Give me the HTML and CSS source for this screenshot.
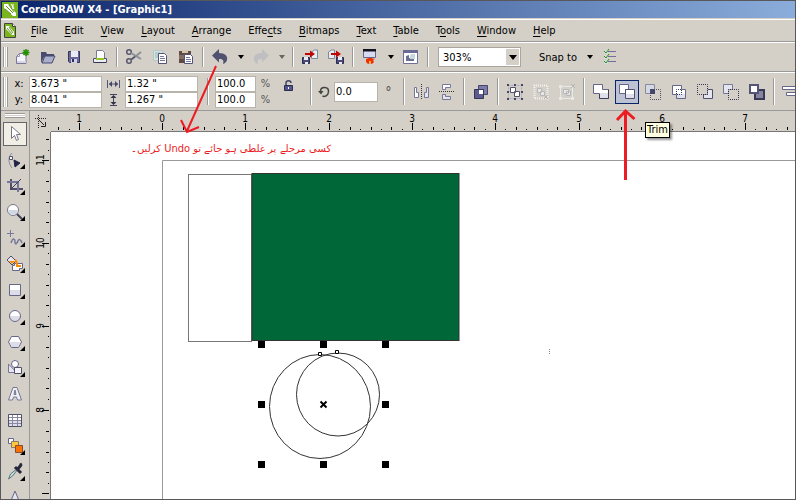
FILE: index.html
```
<!DOCTYPE html>
<html lang="en">
<head>
    <meta charset="UTF-8">
    <title>CorelDRAW X4 - [Graphic1]</title>
    <link rel="stylesheet" href="styles.css">
</head>
<body>
<div class="app">
    <header class="titlebar">
        <svg class="logo" viewBox="0 0 16 16"><rect width="16" height="16" fill="#7ab51d"/><path d="M2 2l4 0 8 9 0 3-3 0-9-8z" fill="#fff"/><path d="M4 4l7 7M7 3l5 7M3 7l6 5" stroke="#5f961a"/><path d="M11 2v5M9 2l3 5" stroke="#fff"/></svg>
        <h1>CorelDRAW X4 - [Graphic1]</h1>
    </header>

    <nav class="menubar">
        <svg class="doc" viewBox="0 0 14 18"><path d="M1.500 1.500h8l3 3v11h-11z" fill="#7ab51d" stroke="#444"/><path d="M9.500 1.500v3h3" fill="#fff" stroke="#444"/><path d="M3 4l3 0 5 6 0 3-2 0-6-6z" fill="#fff"/><path d="M4 6l5 6M6 5l4 6" stroke="#5f961a"/></svg>
        <button><u>F</u>ile</button>
        <button><u>E</u>dit</button>
        <button><u>V</u>iew</button>
        <button><u>L</u>ayout</button>
        <button><u>A</u>rrange</button>
        <button>Effe<u>c</u>ts</button>
        <button><u>B</u>itmaps</button>
        <button><u>T</u>ext</button>
        <button><u>T</u>able</button>
        <button>T<u>o</u>ols</button>
        <button><u>W</u>indow</button>
        <button><u>H</u>elp</button>
    </nav>

    <div class="toolbar standard">
        <span class="grip"></span>
        <button class="tool" aria-label="New"><svg viewBox="0 0 20 20"><path d="M4.500 16.500v-7l3-3h6.500v10z" fill="#f4f4fa" stroke="#77779a"/><path d="M4.500 9.500h3v-3" fill="none" stroke="#9a9ab4"/><path d="M5 14h9v2H5z" fill="#d5d6e2"/><path d="M14 2v7M10.500 5.500h7M11.500 3l5 5M16.500 3l-5 5" stroke="#259000" stroke-width="1.500"/></svg></button>
        <button class="tool" aria-label="Open"><svg viewBox="0 0 20 20"><path d="M3 16V5h5l1 2h7v3H6z" fill="#4a4a70"/><path d="M4 16l3-7h10l-3 7z" fill="#a9aecb" stroke="#4a4a70"/></svg></button>
        <button class="tool" aria-label="Save"><svg viewBox="0 0 20 20"><path d="M4.500 4.500h11v11h-10l-1-1z" fill="#68689b" stroke="#35355e"/><path d="M7 4h7v6H7z" fill="#e9eaf4"/><path d="M7 12h6v4H7z" fill="#d0d2e4"/><path d="M8 12h2v3H8z" fill="#2d2d55"/></svg></button>
        <button class="tool" aria-label="Print"><svg viewBox="0 0 20 20"><path d="M6.500 11V3.500h6l2 2V11" fill="#fff" stroke="#7a7a96"/><path d="M3.500 11.500h13v4h-13z" fill="#edeef3" stroke="#50506c"/><path d="M6 12h8" stroke="#94c82c" stroke-width="2"/><path d="M4 15.500h12" stroke="#35354f"/></svg></button>
        <span class="sep"></span>
        <button class="tool" aria-label="Cut"><svg viewBox="0 0 20 20"><circle cx="5" cy="5" r="2.300" fill="none" stroke="#55576d" stroke-width="1.500"/><circle cx="5" cy="14" r="2.300" fill="none" stroke="#55576d" stroke-width="1.500"/><path d="M7 6l10 6M7 13l10-8" stroke="#8d8f99" stroke-width="2"/><path d="M7 12.500l4-3" stroke="#4a4b60" stroke-width="1.500"/></svg></button>
        <button class="tool" aria-label="Copy"><svg viewBox="0 0 20 20"><path d="M3.500 3.500h9v10h-9z" fill="#d3e3df" stroke="#b3c9c9"/><path d="M5 6h5M5 8h4M5 10h4" stroke="#94b6b9"/><path d="M8.500 6.500h6l2 2v8h-8z" fill="#fff" stroke="#53537a"/><path d="M10 9.500h4M10 11.500h5M10 13.500h5" stroke="#77779a"/></svg></button>
        <button class="tool" aria-label="Paste"><svg viewBox="0 0 20 20"><path d="M3 4h12v12H3z" fill="#5e4b46"/><path d="M3 8h12v4H3z" fill="#836b60"/><path d="M6 3h6v3H6z" fill="#d6c5ae"/><path d="M8.500 7.500h6l2 2v7h-8z" fill="#fff" stroke="#53537a"/><path d="M10 10.500h4M10 12.500h5M10 14.500h5" stroke="#77779a"/></svg></button>
        <span class="sep"></span>
        <button class="tool" aria-label="Undo"><svg viewBox="0 0 20 20"><path d="M2 8.500L9 2v4c6 0 9 3 8 7-.500 2-2 3.500-4 4 1-3 .500-5-4-5v3.500z" fill="#515170"/></svg></button>
        <button class="drop" aria-label="Undo list"><svg viewBox="0 0 6 4"><path d="M0 0h6L3 4z"/></svg></button>
        <button class="tool" aria-label="Redo" disabled><svg viewBox="0 0 20 20"><path d="M18 8.500L11 2v4C5 6 2 9 3 13c.500 2 2 3.500 4 4-1-3-.500-5 4-5v3.500z" fill="#bfbfc2"/></svg></button>
        <button class="drop" aria-label="Redo list" disabled><svg viewBox="0 0 6 4"><path d="M0 0h6L3 4z"/></svg></button>
        <span class="sep"></span>
        <button class="tool" aria-label="Import"><svg viewBox="0 0 20 20"><path d="M11.500 11.500V5l3-2h3v8.500z" fill="#e4edf0" stroke="#83879a"/><path d="M2.500 10.500h7v6h-7z" fill="#4a4a78" stroke="#2c2c51"/><path d="M4 10h4v3H4zM5 15h3v2H5z" fill="#e9eaf4"/><path d="M5 6h5V3.500l5 3.500-5 3.500V8H5z" fill="#c00505"/></svg></button>
        <button class="tool" aria-label="Export"><svg viewBox="0 0 20 20"><path d="M2.500 11.500V5l3-2h3v8.500z" fill="#e4edf0" stroke="#83879a"/><path d="M10.500 10.500h7v6h-7z" fill="#4a4a78" stroke="#2c2c51"/><path d="M12 10h4v3h-4zM13 15h3v2h-3z" fill="#e9eaf4"/><path d="M5 6h5V3.500l5 3.500-5 3.500V8H5z" fill="#c00505"/></svg></button>
        <span class="sep"></span>
        <button class="tool" aria-label="Application launcher"><svg viewBox="0 0 20 20"><path d="M3.500 2.500h12v8h-12z" fill="#d9dcf0" stroke="#66668a"/><path d="M3 2h13v2.500H3z" fill="#111120"/><path d="M6 12l3-1h2l4 1-2 1 1 2-2 2-2-1-2 1-2-2z" fill="#f03000"/><path d="M9 14h2v2H9z" fill="#ffb238"/></svg></button>
        <button class="drop" aria-label="Launcher list"><svg viewBox="0 0 6 4"><path d="M0 0h6L3 4z"/></svg></button>
        <button class="tool" aria-label="Welcome screen"><svg viewBox="0 0 20 20"><path d="M2.500 3.500h14v13h-14z" fill="#fff" stroke="#70709a"/><path d="M2 3h15v3H2z" fill="#6a6a95"/><path d="M5 9l3-1v3h2V8l3-1v7H5z" fill="#6b7196"/><path d="M9 8l2-1h3v5H9z" fill="#c7d7dc"/></svg></button>
        <span class="sep"></span>
        <span class="zoom">
            <select aria-label="Zoom levels"><option>303%</option></select>
            <span class="zoom-arrow"><svg viewBox="0 0 8 5"><path d="M0 0h8L4 5z"/></svg></span>
        </span>
        <button class="snap">Snap to <svg viewBox="0 0 6 4"><path d="M0 0h6L3 4z"/></svg></button>
        <button class="tool" aria-label="Options"><svg viewBox="0 0 20 20"><path d="M8 4.500h8M8 9.500h8M8 14.500h8" stroke="#70709a"/><path d="M4 3h4v4H4zM4 8h4v4H4zM4 13h4v4H4z" fill="#d6d9df"/><path d="M4 4l2 2 3-4M4 9l2 2 3-4M4 14l2 2 3-4" fill="none" stroke="#299513"/></svg></button>
    </div>

    <div class="toolbar property">
        <span class="grip"></span>
        <div class="fields position">
            <label for="pos-x">x:</label><input id="pos-x" value="3.673 &quot;">
            <label for="pos-y">y:</label><input id="pos-y" value="8.041 &quot;">
        </div>
        <div class="fields size">
            <label for="obj-w" aria-label="Width"><svg viewBox="0 0 13 12"><path d="M.5 2v8M12.500 2v8M2 6h9" stroke="#55557a"/><path d="M2 6l3-3v6zM11 6L8 3v6z" fill="#444466"/></svg></label><input id="obj-w" value="1.32 &quot;">
            <label for="obj-h" aria-label="Height"><svg viewBox="0 0 13 12"><path d="M3 .5h7M3 11.500h7M6.500 2v8" stroke="#444460"/><path d="M6.500 1l3 3h-6zM6.500 11l3-3h-6z" fill="#333344"/></svg></label><input id="obj-h" value="1.267 &quot;">
        </div>
        <span class="sep"></span>
        <div class="fields scale">
            <input id="scale-x" value="100.0"><label for="scale-x">%</label>
            <input id="scale-y" value="100.0"><label for="scale-y">%</label>
        </div>
        <button class="tool lock" aria-label="Nonproportional scaling"><svg viewBox="0 0 20 20"><path d="M8 9V6c0-3 5-3 5 0" fill="none" stroke="#444466" stroke-width="1.500"/><path d="M6.500 8.500h8v5h-8z" fill="#55558d" stroke="#2c2c51"/><path d="M10 10h1v2h-1z" fill="#fff"/></svg></button>
        <span class="sep"></span>
        <div class="rotation">
            <label for="angle" aria-label="Angle of rotation"><svg viewBox="0 0 12 12"><path d="M2.500 5C3 0 11 .5 10.500 6c-.5 4-4 5-6 4" fill="none" stroke="#444" stroke-width="1.500"/><path d="M0 5h5.500L3 8.500z" fill="#444"/></svg></label>
            <input id="angle" value="0.0">
            <span>°</span>
        </div>
        <span class="sep"></span>
        <button class="tool" aria-label="Mirror horizontally"><svg viewBox="0 0 20 20"><path d="M3.500 5.500h2v5h2v5h-4z" fill="#fff" stroke="#77779a"/><path d="M17.500 5.500h-2v5h-2v5h4z" fill="#e4e5ef" stroke="#77779a"/><path d="M10.500 2v16" stroke="#333" stroke-dasharray="1 1"/></svg></button>
        <button class="tool" aria-label="Mirror vertically"><svg viewBox="0 0 20 20"><path d="M5.500 2.500h8v3h-5v2h-3z" fill="#fff" stroke="#77779a"/><path d="M5.500 17.500h8v-3h-5v-2h-3z" fill="#e4e5ef" stroke="#77779a"/><path d="M2 9.500h16" stroke="#333" stroke-dasharray="1 1"/></svg></button>
        <span class="sep"></span>
        <button class="tool" aria-label="Combine"><svg viewBox="0 0 20 20"><path d="M7.500 3.500h9v9h-9z" fill="#7c7ca8" stroke="#44446c"/><path d="M3.500 7.500h9v9h-9z" fill="#5c5c8c" stroke="#34345c"/><path d="M8 8h4v4H8z" fill="#fff"/></svg></button>
        <span class="sep"></span>
        <button class="tool" aria-label="Group"><svg viewBox="0 0 20 20"><path d="M3.500 3.500h13v13h-13z" fill="none" stroke="#aaaabd" stroke-dasharray="2 1"/><path d="M2 2h2v2H2zM9 2h2v2H9zM16 2h2v2h-2zM2 9h2v2H2zM16 9h2v2h-2zM2 16h2v2H2zM9 16h2v2H9zM16 16h2v2h-2z" fill="#44446c"/><path d="M5.500 5.500h5v5h-5zM9.500 9.500h5v5h-5z" fill="#fff" stroke="#50506c"/></svg></button>
        <button class="tool" aria-label="Ungroup" disabled><svg viewBox="0 0 20 20"><path class="dots" d="M3.500 3.500h13v13h-13z" fill="none" stroke="#f1f1ef" stroke-width="2"/><path d="M6.500 6.500h4v4h-4zM9.500 9.500h4v4h-4z" fill="#e8e8e8" stroke="#b8b8bb"/><path d="M13 13l4 4M17 13l-4 4" stroke="#b6b3ae"/></svg></button>
        <button class="tool" aria-label="Ungroup all" disabled><svg viewBox="0 0 20 20"><path d="M3.500 4.500h12v12h-12z" fill="none" stroke="#e8e8e6"/><path d="M2 3h3v3H2zM14 15h3v3h-3zM2 15h3v3H2z" fill="#e8e8e6"/><path d="M6.500 7.500h5v4h-5zM9.500 9.500h4v4h-4z" fill="#e8e8e8" stroke="#b8b8bb"/><path d="M14 2l4 4M18 2l-4 4" stroke="#b6b3ae"/></svg></button>
        <span class="sep"></span>
        <button class="tool" aria-label="Weld"><svg viewBox="0 0 20 20"><path d="M2.500 2.500h9v5h6v9h-9v-5h-6z" fill="#fff" stroke="#66668a"/><path d="M9 11h8v5H9z" fill="#dfe0ea"/><path d="M8.500 12v4.500h9v-9" fill="none" stroke="#3d3d5c"/></svg></button>
        <button class="tool selected" aria-label="Trim"><svg viewBox="0 0 20 20"><path d="M2.500 2.500h9v5h-3v4h-6z" fill="#fff" stroke="#66668a"/><path d="M8.500 7.500h9v9h-9z" fill="#fff" stroke="#50506c"/><path d="M9 12h8v4H9z" fill="#dfe0ea"/></svg></button>
        <button class="tool" aria-label="Intersect"><svg viewBox="0 0 20 20"><path d="M2.500 2.500h9v9h-9z" fill="#d5dae2" stroke="#8888a2"/><path d="M7 7h5v5H7z" fill="#44446c"/><path class="dots" d="M7.500 7.500h10v10h-10z" fill="none" stroke="#50506c"/></svg></button>
        <button class="tool" aria-label="Simplify"><svg viewBox="0 0 20 20"><path d="M3.500 3.500h9v4h4v9h-9v-4h-4z" fill="#fff" stroke="#66668a"/><path d="M8 12h8v4H8z" fill="#dfe0ea"/><path class="dots" d="M7.500 7.500h5v5h-5z" fill="none" stroke="#333355"/></svg></button>
        <button class="tool" aria-label="Front minus back"><svg viewBox="0 0 20 20"><path d="M12.500 7.500h5v9h-9v-4h4z" fill="#e4e5ef" stroke="#50506c"/><path class="dots" d="M2.500 2.500h10v10h-10z" fill="#d4d0c8" stroke="#333355"/></svg></button>
        <button class="tool" aria-label="Back minus front"><svg viewBox="0 0 20 20"><path d="M2.500 2.500h9v5h-4v4h-5z" fill="#e4e5ef" stroke="#77779a"/><path class="dots" d="M7.500 7.500h10v10h-10z" fill="#d4d0c8" stroke="#333355"/></svg></button>
        <button class="tool" aria-label="Create boundary"><svg viewBox="0 0 20 20"><path d="M8 8h9v9H8z" fill="#85859f" stroke="#383858" stroke-width="2"/><path d="M3 3h8v8H3z" fill="#fff" stroke="#55557a" stroke-width="2"/></svg></button>
        <span class="sep"></span>
        <button class="tool" aria-label="Align and distribute"><svg viewBox="0 0 20 20"><path d="M1.500 4.500h14v3h-14zM5.500 10.500h12v3h-12z" fill="#fff" stroke="#66668a"/></svg></button>
    </div>

    <main class="workspace">
        <aside class="toolbox">
            <span class="grip"></span>
            <button class="tool selected" aria-label="Pick"><svg viewBox="0 0 20 20"><path d="M6.500 2.500v12l3-3 2 5 2-1-2-5h4z" fill="#fff" stroke="#77778a"/></svg></button>
            <button class="tool fly" aria-label="Shape"><svg viewBox="0 0 20 20"><path d="M7 3C2 8 4 14 7 18" fill="none" stroke="#8888a0"/><path d="M4.500 6.500h3v3h-3z" fill="#fff" stroke="#50506c"/><path d="M9 10l6 3-5 4z" fill="#222244" stroke="#222244"/></svg></button>
            <button class="tool fly" aria-label="Crop"><svg viewBox="0 0 20 20"><path d="M6 3v10h12" fill="none" stroke="#50506c" stroke-width="2"/><path d="M2 6h11v10" fill="none" stroke="#77779a" stroke-width="2"/><path d="M5 14L16 3" stroke="#3d3d5c"/></svg></button>
            <button class="tool fly" aria-label="Zoom"><svg viewBox="0 0 20 20"><circle cx="8" cy="8" r="5.500" fill="#fff" stroke="#77778a"/><path d="M3.500 8h9a4.500 4.500 0 01-9 0z" fill="#cfd8e4"/><path d="M12 12l5 5" stroke="#44445c" stroke-width="2"/></svg></button>
            <button class="tool fly" aria-label="Freehand"><svg viewBox="0 0 20 20"><path d="M5.500 2v7M2 5.500h7" stroke="#77779a"/><path d="M6 15c2-6 4-4 4-1s2 2 3-1 3-1 4 2" fill="none" stroke="#77779a" stroke-width="1.500"/></svg></button>
            <button class="tool fly" aria-label="Smart fill"><svg viewBox="0 0 20 20"><path d="M6 2l5 5-4 4-5-5z" fill="#e7e8ef" stroke="#50506c"/><path d="M4 7h6l-3 3z" fill="#ff8a00"/><path d="M9.500 9.500h8v5h-3v2h-7v-5h2z" fill="#fff" stroke="#66668a"/><path d="M10 6q2 1 2 6h4" fill="none" stroke="#ff8a00" stroke-width="2"/></svg></button>
            <button class="tool fly" aria-label="Rectangle"><svg viewBox="0 0 20 20"><path d="M4.500 4.500h11v11h-11z" fill="#fff" stroke="#66668a"/><path d="M5 10h10v5H5z" fill="#dcdde6"/></svg></button>
            <button class="tool fly" aria-label="Ellipse"><svg viewBox="0 0 20 20"><circle cx="10" cy="10" r="5.500" fill="#fff"/><path d="M4.500 10h11a5.500 5.500 0 01-11 0z" fill="#dcdde6"/><circle cx="10" cy="10" r="5.500" fill="none" stroke="#66668a"/></svg></button>
            <button class="tool fly" aria-label="Polygon"><svg viewBox="0 0 20 20"><path d="M6.500 4.500h7l3 5.500-3 5.500h-7L3.500 10z" fill="#fff" stroke="#66668a"/><path d="M4.500 10h11l-2.500 5H7z" fill="#dcdde6"/></svg></button>
            <button class="tool fly" aria-label="Basic shapes"><svg viewBox="0 0 20 20"><path d="M3.500 6v8.500h8z" fill="#e4e5ef" stroke="#77779a"/><circle cx="10" cy="6" r="3.500" fill="#fff" stroke="#66668a"/><path d="M9.500 9.500h7v6h-7z" fill="#f4f4fa" stroke="#50506c"/></svg></button>
            <button class="tool" aria-label="Text"><svg viewBox="0 0 20 20"><path d="M8 3.500h4l4.500 12.500h-4l-1-3h-3l-1 3h-4zM9 10.500h2L10 6z" fill="#eef0f7" fill-rule="evenodd" stroke="#77778f"/></svg></button>
            <button class="tool" aria-label="Table"><svg viewBox="0 0 20 20"><path d="M3.500 4.500h13v12h-13z" fill="#fff" stroke="#50506c"/><path d="M4 11h12v5H4z" fill="#dcdde6"/><path d="M4 7.500h12M4 10.500h12M4 13.500h12M7.500 5v11M12.500 5v11" stroke="#8888a2"/></svg></button>
            <button class="tool fly" aria-label="Interactive blend"><svg viewBox="0 0 20 20"><path d="M3.500 2.500h5v5h-5z" fill="#fff" stroke="#66668a"/><path d="M6.500 5.500h7v6h-7z" fill="#ffc83c" stroke="#8a7a66"/><path d="M10.500 9.500h7v7h-7z" fill="#ff7200" stroke="#8a4a2c"/></svg></button>
            <button class="tool fly" aria-label="Eyedropper"><svg viewBox="0 0 20 20"><path d="M3.500 17l2-5 5-4 1 1-4 5z" fill="#c7dcdc" stroke="#587678"/><path d="M10 5l6 6M12 8l4-5" stroke="#26263c" stroke-width="3"/><path d="M15 3l2-1" stroke="#26263c" stroke-width="3"/></svg></button>
            <button class="tool" aria-label="Outline"><svg viewBox="0 0 20 20"><path d="M10 3l5 12H5z" fill="#e4e5ef" stroke="#66668a"/></svg></button>
        </aside>

        <div class="origin">
            <svg viewBox="0 0 20 20"><path d="M8.500 4v14M5 7.500h11" stroke="#222" stroke-dasharray="1 1"/><path d="M9 9l5 5" stroke="#222"/><path d="M15.500 11v4.500H11" fill="none" stroke="#222"/></svg>
        </div>

        <svg class="ruler ruler-h">
            <defs>
                <g id="inch">
                    <path d="M0 12h1v7H0zM21 16h1v3h-1zM42 16h1v3h-1zM62 16h1v3h-1zM10 18h1v1h-1zM31 18h1v1h-1zM52 18h1v1h-1zM73 18h1v1h-1z"/>
                </g>
            </defs>
            <use href="#inch" x="-55"/><use href="#inch" x="28"/><use href="#inch" x="111"/><use href="#inch" x="194"/><use href="#inch" x="278"/>
            <use href="#inch" x="361"/><use href="#inch" x="444"/><use href="#inch" x="528"/><use href="#inch" x="611"/><use href="#inch" x="694"/>
            <text x="28" y="11">1</text><text x="111" y="11">0</text><text x="194" y="11">1</text><text x="278" y="11">2</text><text x="361" y="11">3</text>
            <text x="444" y="11">4</text><text x="528" y="11">5</text><text x="611" y="11">6</text><text x="694" y="11">7</text>
        </svg>

        <svg class="ruler ruler-v">
            <!-- same ticks mirrored along the diagonal -->
            <g transform="matrix(0 1 1 0 0 0)">
                <use href="#inch" x="-55"/><use href="#inch" x="28"/><use href="#inch" x="111"/><use href="#inch" x="194"/><use href="#inch" x="278"/><use href="#inch" x="361"/>
            </g>
            <g transform="rotate(-90)">
                <text x="-28" y="14">11</text><text x="-111" y="14">10</text><text x="-194" y="14">9</text><text x="-278" y="14">8</text>
            </g>
        </svg>

        <section class="canvas">
            <svg class="drawing">
                <path d="M111.500 3000V28.500H3000" fill="none" stroke="#999"/>
                <rect x="137.500" y="42.500" width="63" height="167" fill="#fff" stroke="#777"/>
                <rect x="201" y="41.500" width="207" height="167" fill="#006838" stroke="#333"/>
                <g fill="none" stroke="#333">
                    <ellipse cx="269" cy="274.500" rx="50.500" ry="52"/>
                    <circle cx="287" cy="262.500" r="41.500"/>
                    <path d="M267.500 220.500h3v3h-3zM284.500 218.500h3v3h-3z" fill="#fff" stroke="#000"/>
                </g>
                <path d="M207 209h7v7h-7zM269 209h7v7h-7zM331 209h7v7h-7zM207 269h7v7h-7zM331 269h7v7h-7zM207 329h7v7h-7zM269 329h7v7h-7zM331 329h7v7h-7z"/>
                <path d="M269.500 269.500l6 6M275.500 269.500l-6 6" stroke="#000" stroke-width="2"/>
                <path d="M498.500 217v5" stroke="#888" stroke-dasharray="1 1"/>
            </svg>
            <p class="note" lang="ur" dir="rtl">کسی مرحلے پر غلطی ہو جائے تو <span lang="en">Undo</span> کرلیں۔</p>
        </section>
    </main>

    <svg class="arrows">
        <path d="M216 66L187 131M181 120l6 12 12-5" stroke-width="2"/>
        <path d="M625.500 180V111M617 120l8.500-9 9 8" stroke-width="3"/>
    </svg>
    <div class="tooltip" role="tooltip">Trim</div>
</div>
</body>
</html>
```
FILE: styles.css
```
* {
    box-sizing: border-box;
}
body {
    margin: 0;
    font-family: "DejaVu Sans Condensed", "DejaVu Sans", sans-serif;
    font-size: 11px;
    color: #000;
}
button,
input,
select {
    font: inherit;
    color: inherit;
}
button {
    background: none;
    border: none;
    padding: 0;
}
svg {
    display: block;
    flex: none;
}
.app {
    position: relative;
    display: flex;
    flex-direction: column;
    height: 100vh;
    overflow: hidden;
    background: #d4d0c8;
    border: 1px solid #58585a;
}
.titlebar {
    display: flex;
    align-items: center;
    height: 17px;
    padding-left: 1px;
    background: linear-gradient(to right, #0a246a, #8aaddb);
    flex: none;
}
.titlebar h1 {
    margin: 0 0 0 3px;
    font-size: 11px;
    color: #fff;
}
.logo {
    width: 16px;
    height: 16px;
}
.menubar {
    display: flex;
    align-items: center;
    height: 23px;
    margin-top: 1px;
    padding-left: 2px;
    gap: 17px;
    border-top: 1px solid #fff;
    border-bottom: 1px solid #999;
    flex: none;
}
.menubar u {
    text-underline-offset: 2px;
}
.doc {
    width: 14px;
    height: 18px;
    margin-right: -3px;
}
.toolbar {
    display: flex;
    align-items: center;
    border-top: 1px solid #fff;
    border-bottom: 1px solid #999;
    padding-left: 2px;
    flex: none;
}
.toolbar > * {
    flex: none;
}
.standard {
    height: 30px;
}
.property {
    height: 39px;
}
.grip {
    width: 5px;
    height: 20px;
    margin-right: 1px;
    border: solid #999;
    border-width: 0 1px;
    background: linear-gradient(to right, #fff 1px, transparent 1px, transparent 2px, #fff 2px);
}
.property .grip {
    height: 30px;
}
.sep {
    width: 2px;
    height: 20px;
    margin: 0 3px;
    background: #fff;
    border-left: 1px solid #999;
}
.property .sep {
    height: 27px;
}
.tool {
    display: flex;
    align-items: center;
    justify-content: center;
    width: 26px;
    height: 24px;
}
.tool svg {
    width: 20px;
    height: 20px;
}
.tool.selected {
    width: 24px;
    margin: 0 1px;
    background: #bcc2d4;
    border: 1px solid #0a246a;
}
.dots {
    stroke-dasharray: 1 1;
    stroke-dashoffset: 0.5;
}
.drop {
    display: flex;
    justify-content: center;
    width: 15px;
}
.drop svg,
.snap svg {
    width: 6px;
    height: 4px;
}
.drop:disabled {
    opacity: 0.5;
}
.zoom {
    position: relative;
    margin-left: 6px;
}
.zoom select {
    display: block;
    appearance: none;
    width: 83px;
    height: 20px;
    padding: 0 20px 0 4px;
    background: #fff;
    border: 1px solid #aaa69e;
    border-radius: 0;
}
.zoom-arrow {
    position: absolute;
    top: 2px;
    right: 2px;
    display: flex;
    align-items: center;
    justify-content: center;
    width: 13px;
    height: 16px;
    background: #d4d0c8;
    pointer-events: none;
}
.zoom-arrow svg {
    width: 8px;
    height: 5px;
}
.snap {
    display: flex;
    align-items: center;
    gap: 10px;
    margin: 0 4px 0 18px;
}
.toolbar input {
    width: 73px;
    height: 16px;
    padding: 0 1px;
    background: #fff;
    border: 1px solid #b8b4ac;
}
.fields {
    display: grid;
    align-items: center;
    justify-items: center;
}
.position {
    grid-template-columns: 20px 73px;
}
.size {
    grid-template-columns: 23px 73px;
    margin-right: 6px;
}
.size svg {
    width: 13px;
    height: 12px;
}
.scale {
    grid-template-columns: 41px 19px;
    margin-left: 3px;
}
.toolbar .scale input {
    width: 41px;
}
.scale label {
    color: #555;
}
.lock {
    padding-bottom: 10px;
}
.property .lock {
    margin-right: 6px;
}
.rotation {
    display: flex;
    align-items: center;
    gap: 4px;
    margin: 0 5px 0 3px;
}
.rotation svg {
    width: 12px;
    height: 12px;
}
.toolbar .rotation input {
    width: 44px;
    height: 20px;
}
.rotation span {
    width: 13px;
    font-size: 14px;
    color: #555;
    text-align: center;
}
.workspace {
    display: grid;
    grid-template-columns: 29px 21px 1fr;
    grid-template-rows: 21px 1fr;
    flex: 1;
    min-height: 0;
}
.toolbox {
    grid-row: 1 / 3;
    display: flex;
    flex-direction: column;
    align-items: center;
    gap: 2px;
    border-right: 1px solid #999;
    overflow: hidden;
}
.toolbox .grip {
    width: 20px;
    height: 5px;
    margin: 2px 0;
    border-width: 1px 0;
    background: linear-gradient(#fff 1px, transparent 1px, transparent 2px, #fff 2px);
    flex: none;
}
.toolbox .tool {
    position: relative;
    flex: none;
}
.toolbox .selected {
    background: #f1eee6;
    border-color: #666;
}
.fly::after {
    content: "";
    position: absolute;
    right: 3px;
    bottom: 3px;
    width: 5px;
    height: 5px;
    background: #000;
    clip-path: polygon(100% 0, 100% 100%, 0 100%);
}
.origin svg {
    width: 20px;
    height: 20px;
}
.ruler {
    width: 100%;
    height: 100%;
    min-width: 0;
    min-height: 0;
    overflow: hidden;
    shape-rendering: crispEdges;
}
.ruler text {
    font-size: 10px;
    text-anchor: middle;
}
.ruler-h {
    border-bottom: 1px solid #777;
}
.ruler-v {
    border-right: 1px solid #777;
}
.canvas {
    position: relative;
    background: #fff;
    overflow: hidden;
}
.drawing {
    position: absolute;
    width: 100%;
    height: 100%;
}
.note {
    position: absolute;
    left: 80px;
    top: 8px;
    margin: 0;
    font-family: "DejaVu Sans", sans-serif;
    font-size: 10px;
    line-height: 18px;
    color: #ed1c24;
    white-space: nowrap;
}
.note span {
    font-family: "DejaVu Sans Condensed", "DejaVu Sans", sans-serif;
    font-size: 11px;
}
.arrows {
    position: absolute;
    inset: -1px;
    width: 100%;
    height: 100%;
    fill: none;
    stroke: #ed1c24;
    pointer-events: none;
}
.tooltip {
    position: absolute;
    left: 644px;
    top: 121px;
    padding: 0 1px;
    line-height: 14px;
    background: #ffffe1;
    border: 1px solid #000;
    box-shadow: 2px 2px 2px rgba(0, 0, 0, 0.4);
}
```
